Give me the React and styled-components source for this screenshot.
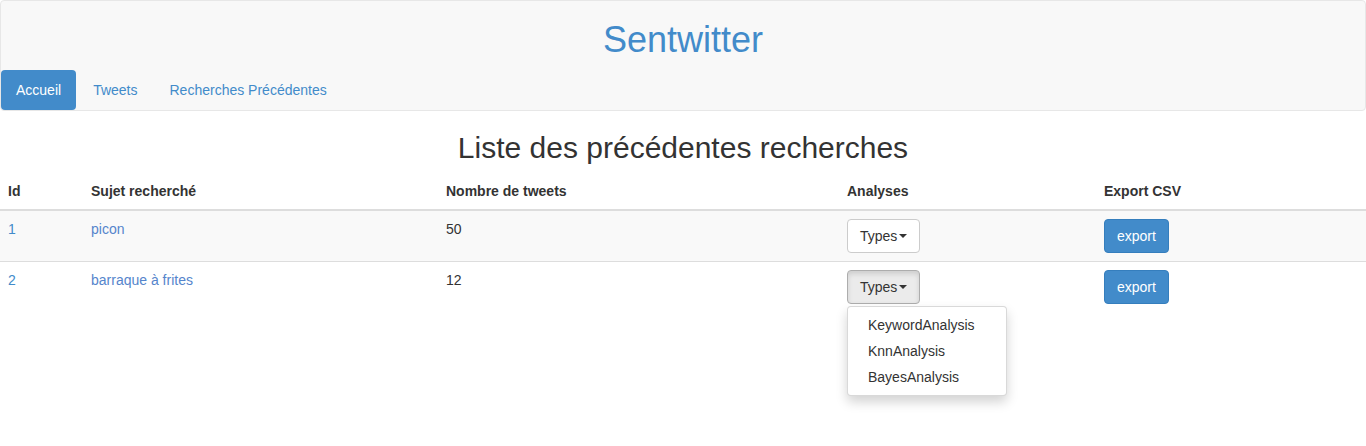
import React from 'react'
import styled, { createGlobalStyle } from 'styled-components'

const GlobalStyle = createGlobalStyle`
  * { box-sizing: border-box; }
  html, body, #root { height: 100%; }
  body {
    margin: 0;
    background: #fff;
    color: #333;
    font-family: "Liberation Sans", Arial, sans-serif;
    font-size: 14px;
    line-height: 1.428571;
  }
`

const searches = [
  { id: 1, subject: 'picon', count: 50, open: false },
  { id: 2, subject: 'barraque à frites', count: 12, open: true },
]

const analyses = ['KeywordAnalysis', 'KnnAnalysis', 'BayesAnalysis']

const columns = [
  { label: 'Id', width: 83 },
  { label: 'Sujet recherché', width: 355 },
  { label: 'Nombre de tweets', width: 401 },
  { label: 'Analyses', width: 257 },
  { label: 'Export CSV', width: 270 },
]

export default function App() {
  return (
    <Page>
      <GlobalStyle />
      <Navbar>
        <Brand>Sentwitter</Brand>
        <Pills>
          <Pill active>Accueil</Pill>
          <Pill>Tweets</Pill>
          <Pill>Recherches Précédentes</Pill>
        </Pills>
      </Navbar>
      <Heading>Liste des précédentes recherches</Heading>
      <Table>
        <colgroup>
          {columns.map((c) => (
            <col key={c.label} style={{ width: c.width }} />
          ))}
        </colgroup>
        <thead>
          <tr>
            {columns.map((c) => (
              <Th key={c.label}>{c.label}</Th>
            ))}
          </tr>
        </thead>
        <tbody>
          {searches.map((s, i) => (
            <Row key={s.id} striped={i % 2 === 0} first={i === 0}>
              <Td>
                <Link>{s.id}</Link>
              </Td>
              <Td>
                <Link subject>{s.subject}</Link>
              </Td>
              <Td>{s.count}</Td>
              <Td>
                <BtnGroup>
                  <TypesButton active={s.open}>
                    Types
                    <Caret />
                  </TypesButton>
                  {s.open && (
                    <DropdownMenu>
                      {analyses.map((a) => (
                        <MenuItem key={a}>{a}</MenuItem>
                      ))}
                    </DropdownMenu>
                  )}
                </BtnGroup>
              </Td>
              <Td>
                <ExportButton>export</ExportButton>
              </Td>
            </Row>
          ))}
        </tbody>
      </Table>
    </Page>
  )
}

const Page = styled.div`
  min-height: 446px;
  width: 1366px;
`

const Navbar = styled.nav`
  background-color: #f8f8f8;
  border: 1px solid #e7e7e7;
  border-radius: 4px;
  padding-top: 19px;
`

const Brand = styled.h1`
  margin: 0 0 10px;
  text-align: center;
  font-size: 36px;
  font-weight: 400;
  line-height: 40px;
  color: #428bca;
`

const Pills = styled.ul`
  display: flex;
  list-style: none;
  margin: 0;
  padding: 0;
  gap: 2px;
`

const Pill = styled.li`
  padding: 10px 15px;
  line-height: 20px;
  border-radius: 4px;
  cursor: pointer;
  color: ${({ active }) => (active ? '#fff' : '#428bca')};
  background-color: ${({ active }) => (active ? '#428bca' : 'transparent')};
`

const Heading = styled.h2`
  margin: 20px 0 9px;
  text-align: center;
  font-size: 30px;
  font-weight: 400;
  line-height: 33px;
  color: #333;
`

const Table = styled.table`
  width: 1366px;
  border-collapse: collapse;
  border-spacing: 0;
  table-layout: fixed;
`

const Th = styled.th`
  text-align: left;
  font-weight: 700;
  padding: 8px;
  line-height: 20px;
  border-bottom: 2px solid #ddd;
  vertical-align: bottom;
`

const Row = styled.tr`
  background-color: ${({ striped }) => (striped ? '#f9f9f9' : 'transparent')};
  border-top: ${({ first }) => (first ? '0' : '1px solid #ddd')};
`

const Td = styled.td`
  padding: 8px;
  line-height: 20px;
  vertical-align: top;
`

const Link = styled.a`
  color: ${({ subject }) => (subject ? '#5585cc' : '#428bca')};
  text-decoration: none;
  cursor: pointer;
`

const BtnGroup = styled.div`
  position: relative;
  display: inline-block;
`

const TypesButton = styled.button`
  font-family: inherit;
  font-size: 14px;
  line-height: 20px;
  padding: 6px 12px;
  border-radius: 4px;
  color: #333;
  cursor: pointer;
  display: inline-flex;
  align-items: center;
  background-color: ${({ active }) => (active ? '#ebebeb' : '#fff')};
  border: 1px solid ${({ active }) => (active ? '#adadad' : '#ccc')};
  box-shadow: ${({ active }) =>
    active ? 'inset 0 3px 5px rgba(0, 0, 0, 0.125)' : 'none'};
`

const Caret = styled.span`
  display: inline-block;
  width: 0;
  height: 0;
  margin-left: 2px;
  border-top: 4px solid #333;
  border-right: 4px solid transparent;
  border-left: 4px solid transparent;
`

const DropdownMenu = styled.ul`
  position: absolute;
  top: 100%;
  left: 0;
  z-index: 1000;
  min-width: 160px;
  margin: 2px 0 0;
  padding: 5px 0;
  list-style: none;
  background-color: #fff;
  border: 1px solid rgba(0, 0, 0, 0.15);
  border-radius: 4px;
  box-shadow: 0 6px 12px rgba(0, 0, 0, 0.175);
`

const MenuItem = styled.li`
  padding: 3px 20px;
  line-height: 20px;
  color: #333;
  white-space: nowrap;
  cursor: pointer;
`

const ExportButton = styled.button`
  font-family: inherit;
  font-size: 14px;
  line-height: 20px;
  padding: 6px 12px;
  border-radius: 4px;
  color: #fff;
  cursor: pointer;
  background-color: #428bca;
  border: 1px solid #357ebd;
`
